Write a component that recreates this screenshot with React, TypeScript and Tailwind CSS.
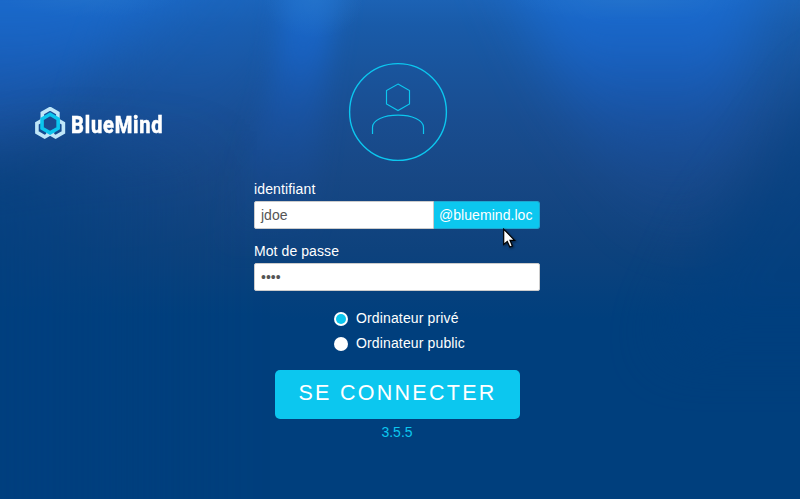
const hexagon = (cx: number, cy: number, r: number) =>
  [0, 1, 2, 3, 4, 5]
    .map((i) => {
      const a = (Math.PI / 3) * i - Math.PI / 2;
      return `${(cx + r * Math.cos(a)).toFixed(2)},${(cy + r * Math.sin(a)).toFixed(2)}`;
    })
    .join(" ");

/* Underwater light: a vertical gradient crossed by soft rays */
function Backdrop() {
  return (
    <svg className="absolute inset-0 -z-10 h-full w-full" viewBox="0 0 800 499" preserveAspectRatio="none">
      <defs>
        <linearGradient id="sea" x1="0" y1="0" x2="0" y2="1">
          <stop offset="0" stopColor="#1c62b4" />
          <stop offset="0.05" stopColor="#195ba9" />
          <stop offset="0.14" stopColor="#19549c" />
          <stop offset="0.24" stopColor="#194d90" />
          <stop offset="0.36" stopColor="#174784" />
          <stop offset="0.5" stopColor="#0e427d" />
          <stop offset="0.64" stopColor="#003f7d" />
          <stop offset="1" stopColor="#003f7d" />
        </linearGradient>
        <linearGradient id="ray" gradientUnits="userSpaceOnUse" x1="0" y1="0" x2="0" y2="260">
          <stop offset="0" stopColor="#1a6cd0" stopOpacity="1" />
          <stop offset="0.2" stopColor="#1965ca" stopOpacity="0.85" />
          <stop offset="0.4" stopColor="#195ab6" stopOpacity="0.6" />
          <stop offset="0.65" stopColor="#1a50a0" stopOpacity="0.35" />
          <stop offset="1" stopColor="#174a8c" stopOpacity="0" />
        </linearGradient>
        <linearGradient id="edgeL" gradientUnits="userSpaceOnUse" x1="0" y1="0" x2="230" y2="0">
          <stop offset="0" stopColor="#003f80" stopOpacity="0.65" />
          <stop offset="1" stopColor="#003f80" stopOpacity="0" />
        </linearGradient>
        <radialGradient id="glint">
          <stop offset="0" stopColor="#2f7dca" stopOpacity="0.55" />
          <stop offset="1" stopColor="#2f7dca" stopOpacity="0" />
        </radialGradient>
        <filter id="soft" filterUnits="userSpaceOnUse" x="-200" y="-200" width="1200" height="900" colorInterpolationFilters="sRGB">
          <feGaussianBlur stdDeviation="12" />
        </filter>
        <filter id="softer" filterUnits="userSpaceOnUse" x="-200" y="-200" width="1200" height="900" colorInterpolationFilters="sRGB">
          <feGaussianBlur stdDeviation="28" />
        </filter>
      </defs>
      <rect width="800" height="499" fill="url(#sea)" />
      <polygon points="-120,-100 240,-100 150,20 60,100 0,150 -120,190" fill="url(#ray)" opacity="0.85" filter="url(#softer)" />
      <polygon points="170,-60 300,-60 260,90 200,200 60,220 110,80" fill="url(#ray)" opacity="0.3" filter="url(#softer)" />
      <polygon points="290,-60 347,-60 326,80 310,260 215,260 272,80" fill="url(#ray)" opacity="0.85" filter="url(#soft)" />
      <polygon points="480,-100 780,-100 750,50 720,260 640,230 560,90" fill="url(#ray)" opacity="0.95" filter="url(#softer)" />
      <polygon points="-100,170 60,150 230,150 230,600 -100,600" fill="url(#edgeL)" filter="url(#softer)" />
      <polygon points="900,60 830,80 775,150 710,240 660,350 900,350" fill="#003f80" opacity="0.6" filter="url(#softer)" />
      <ellipse cx="314" cy="-2" rx="50" ry="40" fill="url(#glint)" opacity="0.8" />
      <ellipse cx="630" cy="-3" rx="120" ry="24" fill="url(#glint)" opacity="0.8" />
      <ellipse cx="90" cy="-3" rx="90" ry="20" fill="url(#glint)" opacity="0.6" />
    </svg>
  );
}

function Logo() {
  return (
    <div className="flex h-8 items-center">
      <svg width="32" height="33" viewBox="0 0 32 33" fill="none" className="shrink-0">
        <g stroke="#bfe6f8" strokeWidth="3.6">
          <polygon points={hexagon(15.1, 10.6, 9)} />
          <polygon points={hexagon(9.7, 20.9, 9)} />
          <polygon points={hexagon(20.6, 20.9, 9)} />
        </g>
        <polygon points={hexagon(15.1, 16.6, 9.3)} fill="#1a4b8e" stroke="#0bc6ee" strokeWidth="3.6" />
      </svg>
      <span className="mt-[3px] ml-1 origin-left scale-x-[0.82] font-['Roboto',sans-serif] text-[24.5px] leading-8 font-extrabold tracking-[0.95px] text-white [-webkit-text-stroke:0.5px_white]">
        BlueMind
      </span>
    </div>
  );
}

function Avatar() {
  return (
    <svg width="100" height="100" viewBox="0 0 100 100" fill="none" stroke="#0cc7ef">
      <circle cx="50" cy="50" r="48.4" strokeWidth="1.4" />
      <path d="M50 22.1 61.5 28.6V42L50 48.6 38.5 42V28.6Z" strokeWidth="1.15" />
      <path d="M24.5 72V65.5C24.5 58 36 53.2 50 53.2S75.5 58 75.5 65.5V72" strokeWidth="1.2" />
    </svg>
  );
}

function Radio({ label, checked }: { label: string; checked?: boolean }) {
  return (
    <div className="flex h-[25px] items-center">
      <span className="flex size-[14px] items-center justify-center rounded-full bg-white">
        {checked && <span className="size-[10px] rounded-full bg-[#0cc7ef]" />}
      </span>
      <span className="mb-0.5 ml-2 tracking-[0.14px]">{label}</span>
    </div>
  );
}

export default function App() {
  return (
    <div className="relative isolate grid h-[499px] w-[800px] grid-cols-[254px_286px_1fr] overflow-hidden bg-[#003f7d] font-['Liberation_Sans',Arial,sans-serif] text-[14px] leading-5 text-white">
      <Backdrop />
      <div className="pt-[107px] pl-[35px]">
        <Logo />
      </div>
      <main className="flex flex-col pt-[62px]">
        <div className="ml-[94px] h-[117px]">
          <Avatar />
        </div>
        <label className="h-[22px] tracking-[0.14px]">identifiant</label>
        <div className="relative flex h-7">
          <div className="flex w-[180px] items-center rounded-l-xs border border-[#ccc] bg-white pl-1.5 text-[#555]">
            jdoe
          </div>
          <div className="flex w-[106px] items-center rounded-r-[3px] border border-l-0 border-[#1ea7cf] bg-[#0cc7ef] pl-[5px] tracking-[0.05px]">
            @bluemind.loc
          </div>
          <svg width="14" height="21" viewBox="0 0 14 21" className="absolute top-[27px] left-[249px] drop-shadow-[1px_1px_1px_rgba(0,0,0,0.5)]">
            <path d="M.7 1.2V16.5L4.3 13.4 6.8 19 9.4 17.9 7 12.3H11.6Z" fill="white" stroke="black" strokeWidth="1.2" />
          </svg>
        </div>
        <label className="mt-3 h-[22px] tracking-[0.08px]">Mot de passe</label>
        <div className="flex h-7 items-center rounded-xs border border-[#ccc] bg-white pl-1.5 text-[#555]">••••</div>
        <div className="mt-[15px] ml-20">
          <Radio label="Ordinateur privé" checked />
          <Radio label="Ordinateur public" />
        </div>
        <button className="mt-[14px] ml-[21px] h-[49px] w-[245px] rounded-[5px] bg-[#0cc7ef] pb-1 text-[21.5px] tracking-[2.28px]">
          SE CONNECTER
        </button>
        <div className="mt-[3px] text-center text-[#0cc7ef]">3.5.5</div>
      </main>
    </div>
  );
}
